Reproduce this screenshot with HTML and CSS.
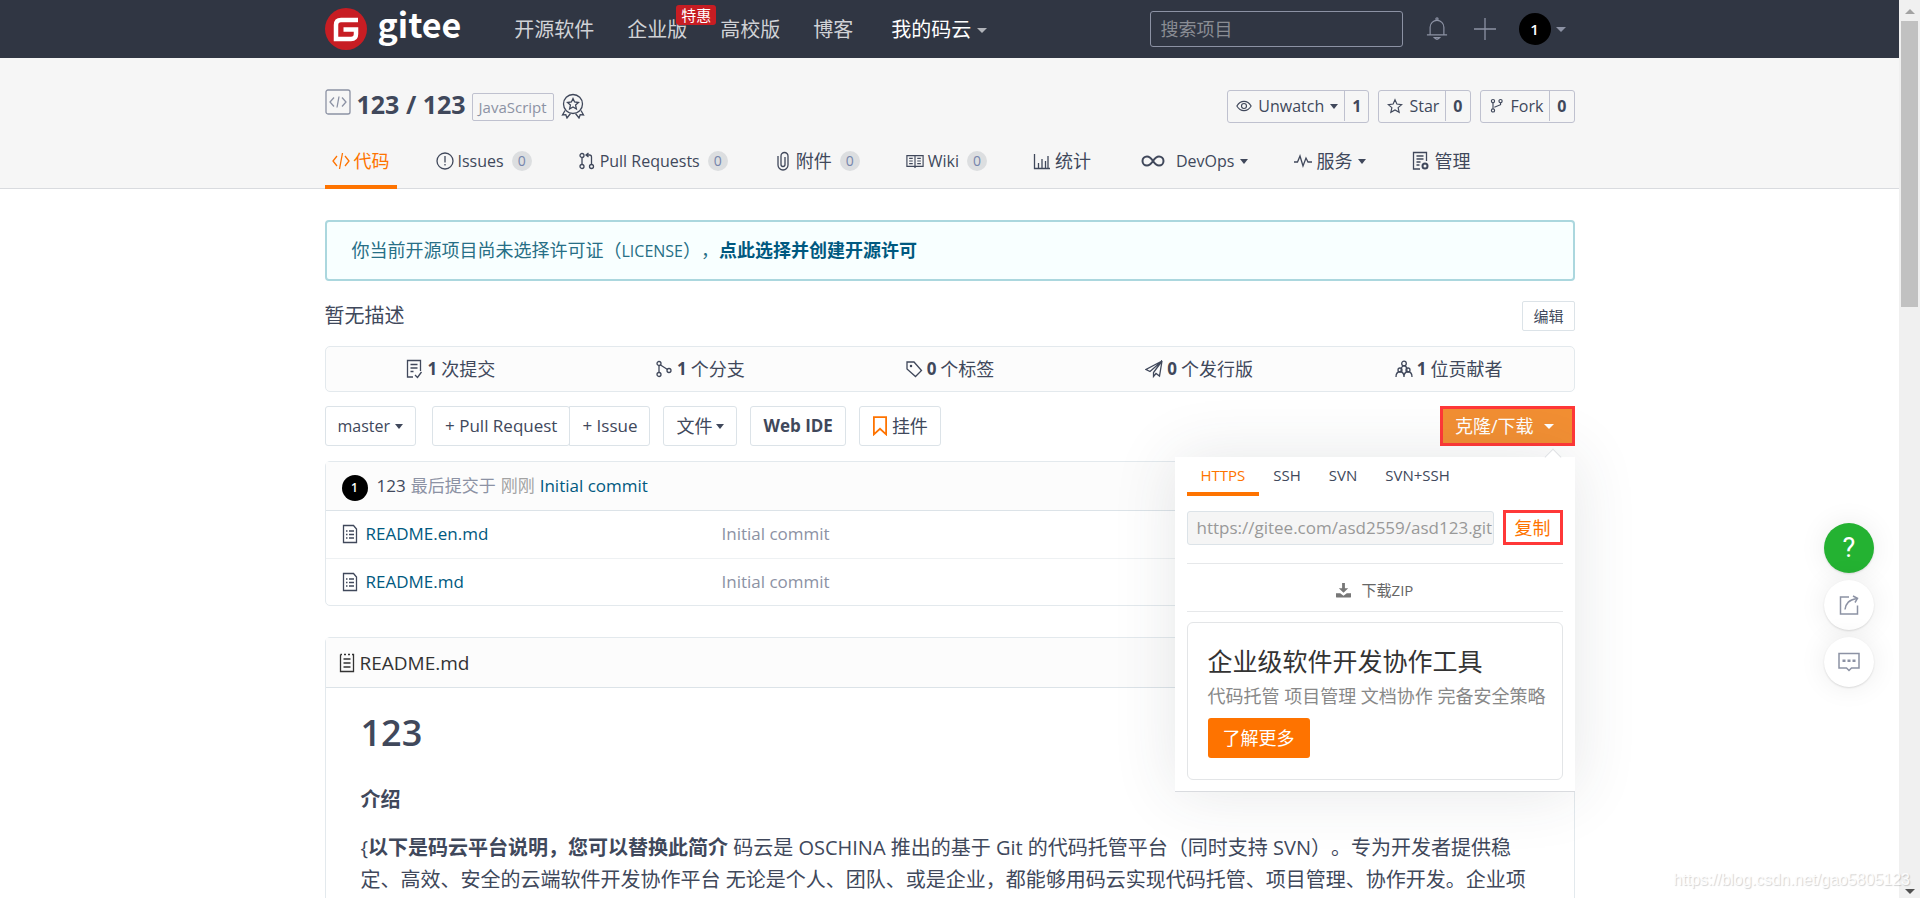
FILE: index.html
```html
<!DOCTYPE html>
<html lang="zh-CN">
<head>
<meta charset="utf-8">
<title>123/123 - 码云 Gitee.com</title>
<link rel="stylesheet" href="styles.css">
</head>
<body>
<svg class="sprite" aria-hidden="true">
  <symbol id="i-code" viewBox="0 0 18 18"><path d="M5 4 1 9l4 5M13 4l4 5-4 5M10.500 1l-3 16"/></symbol>
  <symbol id="i-issue" viewBox="0 0 18 18"><circle cx="9" cy="9" r="8"/><path d="M9 4v6.500M9 12v1.500"/></symbol>
  <symbol id="i-pr" viewBox="0 0 18 18"><circle cx="4" cy="3.500" r="2"/><circle cx="4" cy="14.500" r="2"/><circle cx="13.500" cy="14.500" r="2"/><path d="M4 5.500v7M13.500 12.500V5q0-2-2-2H8M10.500 1 8 3l2.500 2"/></symbol>
  <symbol id="i-clip" viewBox="0 0 14 20"><path d="M2 5v9a5 5 0 0 0 10 0V5a3.500 3.500 0 0 0-7 0v8.500a2 2 0 0 0 4 0V6"/></symbol>
  <symbol id="i-book" viewBox="0 0 20 16"><path d="M1 2h18v12h-8l-1 1-1-1H1zM10 2v12M3.500 5h4M3.500 8h4M3.500 11h4M12.500 5h4M12.500 8h4M12.500 11h4"/></symbol>
  <symbol id="i-chart" viewBox="0 0 18 18"><path d="M1.500 2v14.500H17M5.500 16v-5M9 16V7M12.500 16V9M15 16V4"/></symbol>
  <symbol id="i-loop" viewBox="0 0 24 14"><path stroke-width="2" d="M12 7C10 4 8.500 2.500 6 2.500a4.500 4.500 0 0 0 0 9C8.500 11.500 10 10 12 7s3.500-4.500 6-4.500a4.500 4.500 0 0 1 0 9c-2.500 0-4-1.500-6-4.500z"/></symbol>
  <symbol id="i-pulse" viewBox="0 0 18 18"><path d="M0 10h3.500L6 4l3 10 3-8 2 4h4"/></symbol>
  <symbol id="i-manage" viewBox="0 0 18 20"><path d="M8 18H1.500V1.500h13V10M4.500 5h7M4.500 8h7M4.500 11h4M4.500 14h3"/><circle cx="13" cy="15" r="2.500" stroke-width="2"/></symbol>
  <symbol id="i-repo" viewBox="0 0 26 26"><rect x="1" y="1" width="24" height="24" rx="2"/><path d="M9 8.500 5 13l4 4.500M17 8.500l4 4.500-4 4.500M14 7.500l-2 11"/></symbol>
  <symbol id="i-medal" viewBox="0 0 24 26"><circle cx="12" cy="11" r="9.500"/><path d="m12 5.500 1.600 3.500 3.900.5-2.900 2.600.8 3.900-3.400-2-3.400 2 .8-3.900-2.900-2.600 3.900-.5zM4 17.500 1.500 22l3.300-.3L6 25l3.500-4.500M20 17.500l2.500 4.500-3.300-.3L18 25l-3.500-4.500"/></symbol>
  <symbol id="i-eye" viewBox="0 0 18 14"><path d="M1 7c4-7 12-7 16 0-4 7-12 7-16 0z"/><circle cx="9" cy="7" r="2.800"/></symbol>
  <symbol id="i-star" viewBox="0 0 18 18"><path d="m9 2 2.100 4.800 5.400.6-4 3.500 1.200 5.200L9 13.500l-4.700 2.600 1.200-5.200-4-3.500 5.400-.6z"/></symbol>
  <symbol id="i-fork" viewBox="0 0 16 18"><circle cx="3.500" cy="3.500" r="1.800"/><circle cx="3.500" cy="14" r="1.800"/><circle cx="12" cy="3.500" r="1.800"/><path d="M3.500 5.300v6.900M12 5.300v2.200L5 10.500"/></symbol>
  <symbol id="i-bell" viewBox="0 0 24 26"><path d="M1 19.500h22M4.500 19V11a7.500 7.500 0 0 1 15 0v8M9 22.500q3 3.500 6 0z"/><circle cx="12" cy="2" r="1.200"/></symbol>
  <symbol id="i-plus" viewBox="0 0 22 22"><path d="M11 0v22M0 11h22"/></symbol>
  <symbol id="i-commit" viewBox="0 0 16 20"><path d="M7 18H1.500V1.500h13V12M4.500 5.500h7M4.500 9h7M4.500 12.500h3M9 16l2.500 2.500L15.500 13"/></symbol>
  <symbol id="i-branch" viewBox="0 0 18 18"><circle cx="4" cy="3.500" r="2"/><circle cx="4" cy="14.500" r="2"/><circle cx="14" cy="10.500" r="2"/><path d="M4 5.500v7M5.500 5l7 4.500"/></symbol>
  <symbol id="i-tag" viewBox="0 0 18 18"><path d="M2 2h7l7.500 8.500-6 6L2 9z"/><circle cx="6" cy="6" r=".6"/></symbol>
  <symbol id="i-plane" viewBox="0 0 18 18"><path d="M17 1 1 9.500l4 2zM17 1 8.500 12.500v4l2.500-3 3.500 2.500z"/></symbol>
  <symbol id="i-people" viewBox="0 0 18 18"><circle cx="9" cy="3.500" r="2.300"/><path d="M6 11c0-7 6-7 6 0"/><circle cx="5" cy="10" r="2"/><circle cx="13" cy="10" r="2"/><path d="M1 17c0-7 8-7 8 0 0-7 8-7 8 0"/></symbol>
  <symbol id="i-mark" viewBox="0 0 14 18"><path d="M1.500 1h11v15.500L7 11.500l-5.500 5z"/></symbol>
  <symbol id="i-file" viewBox="0 0 16 20"><path d="M1.500 1.500h10l3 3.500v13.500h-13zM7 7h5M7 10.500h5M7 14h5M4 7h1.500M4 10.500h1.500M4 14h1.500"/></symbol>
  <symbol id="i-readme" viewBox="0 0 16 20"><path d="M1.500 1.500v17h13v-17H13M1.500 1.500H3M5 1.500h2M9 1.500h2M4.500 6h7M4.500 10h7M4.500 14h7"/></symbol>
  <symbol id="i-down" viewBox="0 0 16 16"><path d="M6.500 0h3v5.500H13L8 10.500 3 5.500h3.500z"/><path d="M0 11h4.500L8 13.500l3.500-2.500H16v4q0 .5-.5.500H.5q-.5 0-.5-.5z"/></symbol>
  <symbol id="i-share" viewBox="0 0 20 20"><path d="M10 2H1.500v17h17v-8.500M6 14.500C7 8 10 5 17.500 3.500M14 1l4.500 2.300L16 7.500"/></symbol>
  <symbol id="i-chat" viewBox="0 0 22 20"><path d="M1 1.500h20v14.500h-7.500L11 18.500 8.500 16H1z"/><path d="M4.500 8.700h3M9.500 8.700h3M14.500 8.700h3" stroke-width="2.500"/></symbol>
</svg>

<div class="window">
  <div class="page">
    <header class="topbar">
      <div class="container topbar-row">
        <a class="logo" href="#">
          <svg class="logo-mark" viewBox="0 0 42 42"><circle cx="21" cy="21" r="21" fill="#c71d23"/><path d="M33 12H16q-5 0-5 5v14h15q5 0 5-5v-4.500H18.500" fill="none" stroke="#fff" stroke-width="4.500"/></svg>
          <span>gitee</span>
        </a>
        <nav class="topnav">
          <a href="#">开源软件</a>
          <a href="#" class="has-flag">企业版<span class="flag">特惠</span></a>
          <a href="#">高校版</a>
          <a href="#">博客</a>
          <a href="#" class="mine">我的码云<i class="caret"></i></a>
        </nav>
        <div class="topright">
          <input class="search" type="search" placeholder="搜索项目" aria-label="搜索项目">
          <button class="plain" aria-label="通知"><svg class="bell"><use href="#i-bell"/></svg></button>
          <button class="plain" aria-label="新建"><svg class="plus"><use href="#i-plus"/></svg></button>
          <button class="plain user" aria-label="用户"><span class="avatar">1</span><i class="caret"></i></button>
        </div>
      </div>
    </header>

    <section class="repo-head">
      <div class="container">
        <div class="title-row">
          <svg class="repo-icon"><use href="#i-repo"/></svg>
          <h1>123 / 123</h1>
          <a class="lang" href="#">JavaScript</a>
          <svg class="medal"><use href="#i-medal"/></svg>
          <div class="actions">
            <div class="action"><button><svg class="ic-s"><use href="#i-eye"/></svg>Unwatch<i class="caret"></i></button><a href="#">1</a></div>
            <div class="action"><button><svg class="ic-s"><use href="#i-star"/></svg>Star</button><a href="#">0</a></div>
            <div class="action"><button><svg class="ic-s"><use href="#i-fork"/></svg>Fork</button><a href="#">0</a></div>
          </div>
        </div>
        <nav class="tabs">
          <a class="on" href="#"><svg class="ic"><use href="#i-code"/></svg>代码</a>
          <a href="#"><svg class="ic"><use href="#i-issue"/></svg><span class="en">Issues</span><b>0</b></a>
          <a href="#"><svg class="ic"><use href="#i-pr"/></svg><span class="en">Pull Requests</span><b>0</b></a>
          <a href="#"><svg class="ic"><use href="#i-clip"/></svg>附件<b>0</b></a>
          <a href="#"><svg class="ic"><use href="#i-book"/></svg><span class="en">Wiki</span><b>0</b></a>
          <a href="#"><svg class="ic"><use href="#i-chart"/></svg>统计</a>
          <a href="#"><svg class="ic loop"><use href="#i-loop"/></svg><span class="en">DevOps</span><i class="caret"></i></a>
          <a href="#"><svg class="ic"><use href="#i-pulse"/></svg>服务<i class="caret"></i></a>
          <a href="#"><svg class="ic"><use href="#i-manage"/></svg>管理</a>
        </nav>
      </div>
    </section>

    <main class="container main">
      <div class="alert">你当前开源项目尚未选择许可证（<span class="en">LICENSE</span>），<a href="#">点此选择并创建开源许可</a></div>
      <div class="desc"><span>暂无描述</span><button class="edit">编辑</button></div>
      <div class="stats">
        <a href="#"><svg class="ic"><use href="#i-commit"/></svg><b>1</b>次提交</a>
        <a href="#"><svg class="ic"><use href="#i-branch"/></svg><b>1</b>个分支</a>
        <a href="#"><svg class="ic"><use href="#i-tag"/></svg><b>0</b>个标签</a>
        <a href="#"><svg class="ic"><use href="#i-plane"/></svg><b>0</b>个发行版</a>
        <a href="#"><svg class="ic"><use href="#i-people"/></svg><b>1</b>位贡献者</a>
      </div>
      <div class="toolbar">
        <button class="btn">master<i class="caret"></i></button>
        <div class="group"><button class="btn">+ Pull Request</button><button class="btn">+ Issue</button></div>
        <button class="btn zh">文件<i class="caret"></i></button>
        <button class="btn strong">Web IDE</button>
        <button class="btn zh"><svg class="mark"><use href="#i-mark"/></svg>挂件</button>
        <div class="clone">
          <button class="clone-btn">克隆/下载<i class="caret"></i></button>
          <div class="popup">
            <div class="protocols"><button class="on">HTTPS</button><button>SSH</button><button>SVN</button><button>SVN+SSH</button></div>
            <div class="url-row"><input type="text" readonly value="https://gitee.com/asd2559/asd123.git" aria-label="克隆地址"><button>复制</button></div>
            <a class="zip" href="#"><svg><use href="#i-down"/></svg>下载ZIP</a>
            <div class="promo">
              <h3>企业级软件开发协作工具</h3>
              <p>代码托管 项目管理 文档协作 完备安全策略</p>
              <a href="#">了解更多</a>
            </div>
          </div>
        </div>
      </div>

      <div class="panel files">
        <div class="panel-head"><span class="avatar small">1</span><span class="who">123</span><span class="muted">最后提交于</span><span class="ago">刚刚</span><a href="#">Initial commit</a></div>
        <table>
          <tr><td class="name"><a href="#"><svg class="doc"><use href="#i-file"/></svg>README.en.md</a></td><td>Initial commit</td></tr>
          <tr><td class="name"><a href="#"><svg class="doc"><use href="#i-file"/></svg>README.md</a></td><td>Initial commit</td></tr>
        </table>
      </div>

      <article class="panel readme">
        <div class="panel-head"><svg class="doc"><use href="#i-readme"/></svg>README.md</div>
        <div class="markdown">
          <h1>123</h1>
          <h4>介绍</h4>
          <p>{<strong>以下是码云平台说明，您可以替换此简介</strong> 码云是 OSCHINA 推出的基于 Git 的代码托管平台（同时支持 SVN）。专为开发者提供稳定、高效、安全的云端软件开发协作平台 无论是个人、团队、或是企业，都能够用码云实现代码托管、项目管理、协作开发。企业项</p>
        </div>
      </article>
    </main>

    <div class="float">
      <button class="help" aria-label="帮助">?</button>
      <button aria-label="分享"><svg><use href="#i-share"/></svg></button>
      <button aria-label="反馈"><svg><use href="#i-chat"/></svg></button>
    </div>
  </div>
  <div class="scrollbar" aria-hidden="true"><i class="up"></i><i class="thumb"></i><i class="down"></i></div>
  <div class="watermark">https://blog.csdn.net/gao5805123</div>
</div>
</body>
</html>
```

FILE: styles.css
```css
* { box-sizing: border-box; }
body {
  margin: 0;
  color: #40485b;
  background: #fff;
  font: 18px/24px "Open Sans", "Noto Sans CJK SC", sans-serif;
  text-spacing-trim: space-all;
}
a { color: inherit; text-decoration: none; }
button, input { font: inherit; color: inherit; }
button { cursor: pointer; }
h1, h3, h4, p { margin: 0; }
svg { flex: none; fill: none; stroke: currentColor; stroke-width: 1.3; }
.sprite { position: absolute; width: 0; height: 0; }
.window { display: flex; height: 100vh; overflow: hidden; position: relative; }
.page { flex: 1; min-width: 0; overflow: hidden; }
.container { max-width: 1250px; margin: 0 auto; }
.en { font-size: 16px; }
.ic { width: 18px; height: 20px; }
.caret {
  display: inline-block;
  flex: none;
  border: 5px solid transparent;
  border-top-color: currentColor;
  border-bottom: 0;
}

.topbar { height: 58px; background: #303643; }
.topbar-row { display: flex; align-items: center; height: 58px; color: #d0d2d6; }
.logo { display: flex; align-items: center; gap: 11px; color: #fff; font: 700 34px/44px "Noto Sans CJK SC", sans-serif; }
.logo span { padding-bottom: 11px; }
.logo-mark { width: 42px; height: 42px; stroke: none; }
.topnav { display: flex; gap: 33px; margin-left: 53px; padding-top: 2px; font-size: 20px; }
.topnav .mine { display: flex; align-items: center; gap: 6px; margin-left: 5px; color: #fff; }
.mine .caret { color: #b0b3b9; }
.has-flag { position: relative; }
.flag {
  position: absolute;
  left: 49px;
  top: -13px;
  padding: 0 5px;
  border-radius: 3px;
  background: #c71d23;
  color: #fff;
  font-size: 15px;
  line-height: 20px;
  white-space: nowrap;
}
.topright { display: flex; align-items: center; margin-left: auto; color: #8c92a4; }
.search {
  width: 253px;
  height: 36px;
  padding: 0 10px;
  border: 1px solid #8c92a4;
  border-radius: 3px;
  background: transparent;
  font-size: 18px;
}
.search::placeholder { color: #8a8d94; }
.plain { display: flex; align-items: center; padding: 0; border: 0; background: none; }
.bell { width: 22px; height: 26px; margin: 0 26px 0 23px; }
.plus { width: 22px; height: 22px; margin-right: 23px; }
.user { gap: 5px; margin-right: 9px; }
.avatar {
  display: flex;
  align-items: center;
  justify-content: center;
  width: 32px;
  height: 32px;
  border-radius: 50%;
  background: #000;
  color: #fff;
  font-size: 15px;
  font-weight: 600;
}
.avatar.small { width: 26px; height: 26px; font-size: 12px; margin: 4px 4px 0 0; }

.repo-head { background: #f6f6f6; border-bottom: 1px solid #d9dbdf; }
.title-row { display: flex; align-items: center; height: 72px; padding-top: 24px; }
.repo-icon { width: 26px; height: 26px; color: #8c92a4; margin-bottom: 8px; }
.title-row h1 { margin: 0 6px 4px; font-size: 25px; line-height: 32px; }
.lang {
  padding: 0 6px;
  border: 1px solid #bfc1cf;
  border-radius: 2px;
  color: #8c92a4;
  font-size: 15px;
  line-height: 26px;
  margin-top: 2px;
}
.medal { width: 24px; height: 26px; margin-left: 7px; }
.actions { display: flex; gap: 9px; margin-left: auto; }
.action {
  display: flex;
  align-items: center;
  height: 33px;
  border: 1px solid #bfc1cf;
  border-radius: 3px;
  font-size: 16px;
}
.action button { display: flex; align-items: center; gap: 6px; height: 100%; padding: 0 6px 0 8px; border: 0; background: none; }
.action .caret { border-width: 5px 4px 0; }
.action a { padding: 0 7px; border-left: 1px solid #bfc1cf; font-weight: 700; line-height: 30px; }
.ic-s { width: 16px; height: 16px; }

.tabs { display: flex; gap: 32px; margin-bottom: -1px; }
.tabs a { display: flex; align-items: center; gap: 4px; height: 59px; padding: 7px 7px 0; border-bottom: 4px solid transparent; }
.tabs .on { color: #fe7300; border-color: #fe7300; }
.tabs .en { line-height: 24px; }
.tabs b { min-width: 20px; margin-left: 4px; border-radius: 10px; background: #dcdee0; color: #7685ac; font-size: 14px; font-weight: 400; line-height: 20px; text-align: center; }
.tabs .loop { width: 24px; margin: 0 7px 0 4px; }
.tabs .caret { margin-left: 2px; border-width: 5px 4px 0; }

.main { padding-top: 31px; }
.alert {
  padding: 16px 25px;
  border: 2px solid #abd7de;
  border-radius: 4px;
  background: #f8ffff;
  color: #276f86;
}
.alert a { color: #005980; font-weight: 700; }
.desc { display: flex; justify-content: space-between; align-items: center; margin-top: 20px; font-size: 20px; }
.edit { height: 30px; padding: 0 10px; border: 1px solid #dce3e8; border-radius: 2px; background: #fff; font-size: 15px; }
.stats { display: grid; grid-template-columns: repeat(5, 1fr); margin-top: 15px; border: 1px solid #e3e9ed; border-radius: 5px; background: #fcfcfc; }
.stats a { display: flex; align-items: center; justify-content: center; gap: 4px; height: 44px; }
.stats b { font-size: 17px; }
.toolbar { display: flex; align-items: center; gap: 13px; margin-top: 14px; }
.btn {
  display: flex;
  align-items: center;
  gap: 5px;
  height: 40px;
  padding: 0 12px;
  border: 1px solid #dce3e8;
  border-radius: 3px;
  background: #fff;
  font-size: 16px;
}
.btn.zh { font-size: 18px; gap: 4px; }
.btn .caret { border-width: 5px 4px 0; }
.btn.strong { font-size: 17px; font-weight: 700; }
.group { display: flex; margin-left: 3px; }
.group .btn { font-size: 17px; }
.group .btn + .btn { margin-left: -1px; border-radius: 0 3px 3px 0; }
.mark { width: 16px; height: 20px; color: #fe7300; stroke-width: 1.600; }
.clone { position: relative; margin-left: auto; }
.clone-btn {
  display: flex;
  align-items: center;
  gap: 10px;
  height: 40px;
  padding: 0 18px 0 12px;
  border: 3px solid #ff3838;
  background: #f28f33;
  color: #fff;
}
.popup {
  position: absolute;
  right: 0;
  top: 51px;
  z-index: 2;
  width: 400px;
  padding: 0 12px 11px;
  background: #fff;
  border-bottom: 1px solid #d9dbdf;
  box-shadow: 0 0 60px rgba(48, 54, 67, .12);
}
.popup::before {
  content: "";
  position: absolute;
  right: 16px;
  top: -6px;
  width: 11px;
  height: 11px;
  border: 1px solid #dfe1e4;
  border-width: 1px 0 0 1px;
  background: #fff;
  transform: rotate(45deg);
}
.protocols { display: flex; }
.protocols button { padding: 6px 14px 5px; border: 0; border-bottom: 4px solid transparent; background: none; font-size: 15px; }
.protocols .on { color: #fe7300; border-color: #fe7300; }
.url-row { display: flex; gap: 9px; align-items: center; margin-top: 14px; padding-bottom: 18px; border-bottom: 1px solid #e6e8ea; }
.url-row input { flex: 1; min-width: 0; height: 34px; padding: 0 0 0 9px; border: 1px solid #dce3e8; border-radius: 3px; background: #f5f5f5; color: #999; font-size: 17px; }
.url-row button { width: 60px; height: 35px; padding: 0; border: 3px solid #ff3838; background: #fff; color: #fe7300; font-size: 18px; }
.zip { display: flex; align-items: center; justify-content: center; gap: 11px; padding: 14px 0 9px; border-bottom: 1px solid #e6e8ea; color: #666; font-size: 15px; }
.zip svg { width: 15px; height: 15px; fill: #777; stroke: none; }
.promo { margin-top: 10px; padding: 21px 20px; border: 1px solid #e3e5e7; border-radius: 6px; }
.promo h3 { color: #333; font-size: 25px; font-weight: 400; line-height: 34px; }
.promo p { margin: 6px 0 10px; color: #888; font-size: 18px; white-space: nowrap; }
.promo a { display: inline-block; padding: 8px 15px; border-radius: 3px; background: #fe7300; color: #fff; }

.panel { border: 1px solid #e3e9ed; border-radius: 5px; }
.panel-head { display: flex; align-items: center; gap: 5px; height: 49px; border-bottom: 1px solid #dce3e8; background: #fcfcfc; }
.files { margin-top: 15px; font-size: 17px; }
.files .panel-head { padding-left: 16px; }
.files a { color: #005980; }
.muted { color: #8c92a4; }
.ago { color: #a3a3a3; }
.files table { width: 100%; border-collapse: collapse; }
.files td { height: 47px; padding: 0; color: #8c92a4; }
.files tr + tr td { border-top: 1px solid #eef1f3; }
.files .name { width: 396px; padding-left: 16px; }
.files .name a { display: flex; align-items: center; gap: 8px; }
.files .name svg { color: #40485b; }
.doc { width: 16px; height: 20px; }
.readme { margin-top: 31px; }
.readme .panel-head { padding-left: 13px; color: #333; height: 50px; font-size: 19px; }
.markdown { padding: 22px 35px; font-size: 20px; line-height: 32px; }
.markdown h1 { font-size: 36px; font-weight: 600; line-height: 46px; }
.markdown h4 { margin: 28px 0 16px; font-size: 20px; }

.float { position: absolute; right: 46px; top: 523px; display: flex; flex-direction: column; gap: 7px; }
.float button {
  display: flex;
  align-items: center;
  justify-content: center;
  width: 50px;
  height: 50px;
  padding: 0;
  border: 0;
  border-radius: 50%;
  background: #fff;
  color: #8c92a4;
  box-shadow: 0 1px 2px rgba(0, 0, 0, .12), 0 0 28px rgba(0, 0, 0, .08);
}
.float svg { width: 22px; height: 20px; stroke-width: 1.500; }
.float .help { background: #24b232; color: #fff; font: 400 27px/50px Roboto, sans-serif; }

.scrollbar { display: flex; flex-direction: column; align-items: center; width: 21px; background: #f0f0f0; }
.up { margin: 9px 0 7px; border: 5px solid transparent; border-top: 0; border-bottom-color: #a3a3a3; }
.thumb { width: 17px; height: 286px; background: #c1c1c1; }
.down { margin: auto 0 4px; border: 5px solid transparent; border-bottom: 0; border-top-color: #505050; }
.watermark {
  position: absolute;
  right: 10px;
  bottom: 8px;
  color: rgba(255, 255, 255, .9);
  text-shadow: 1px 1px 1px rgba(0, 0, 0, .18);
  font: 16px/20px "Liberation Sans", sans-serif;
}
```
